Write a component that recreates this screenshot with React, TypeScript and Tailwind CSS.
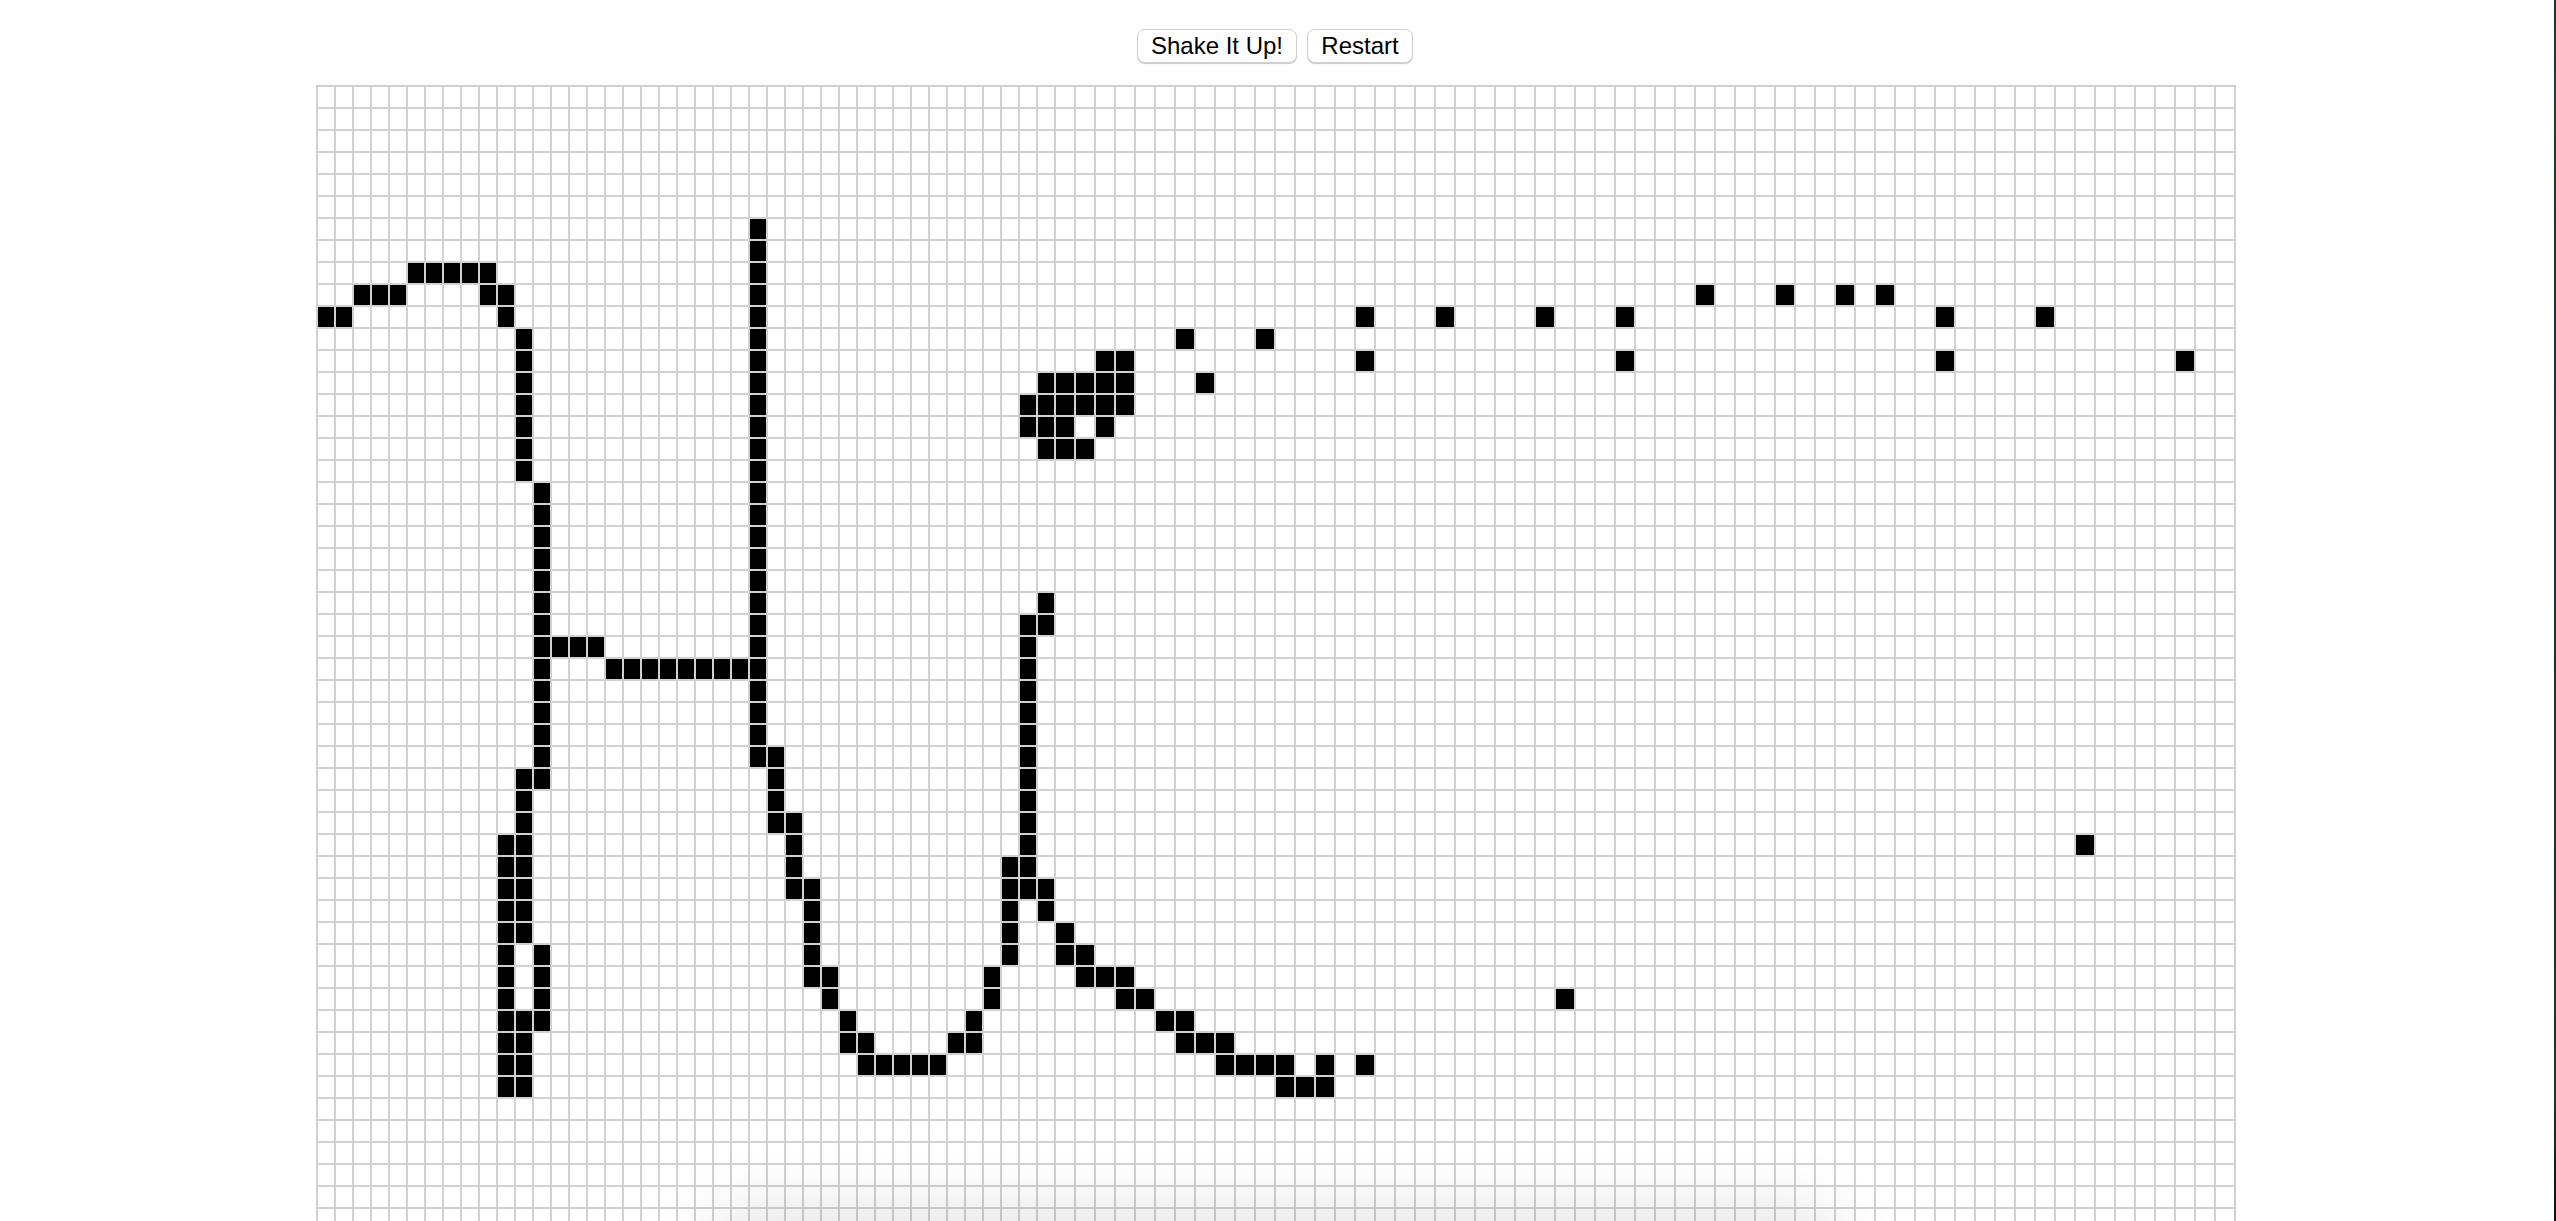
const BLACK_CELLS: Record<number, number[]> = {
  6: [24],
  7: [24],
  8: [5, 6, 7, 8, 9, 24],
  9: [2, 3, 4, 9, 10, 24, 73, 77, 80, 82],
  10: [0, 1, 10, 24, 56, 60, 65, 69, 85, 90],
  11: [11, 24, 47, 51],
  12: [11, 24, 43, 44, 56, 69, 85, 97],
  13: [11, 24, 40, 41, 42, 43, 44, 48],
  14: [11, 24, 39, 40, 41, 42, 43, 44],
  15: [11, 24, 39, 40, 41, 43],
  16: [11, 24, 40, 41, 42],
  17: [11, 24],
  18: [12, 24],
  19: [12, 24],
  20: [12, 24],
  21: [12, 24],
  22: [12, 24],
  23: [12, 24, 40],
  24: [12, 24, 39, 40],
  25: [12, 13, 14, 15, 24, 39],
  26: [12, 16, 17, 18, 19, 20, 21, 22, 23, 24, 39],
  27: [12, 24, 39],
  28: [12, 24, 39],
  29: [12, 24, 39],
  30: [12, 24, 25, 39],
  31: [11, 12, 25, 39],
  32: [11, 25, 39],
  33: [11, 25, 26, 39],
  34: [10, 11, 26, 39, 92],
  35: [10, 11, 26, 38, 39],
  36: [10, 11, 26, 27, 38, 39, 40],
  37: [10, 11, 27, 38, 40],
  38: [10, 11, 27, 38, 41],
  39: [10, 12, 27, 38, 41, 42],
  40: [10, 12, 27, 28, 37, 42, 43, 44],
  41: [10, 12, 28, 37, 44, 45, 66],
  42: [10, 11, 12, 29, 36, 46, 47],
  43: [10, 11, 29, 30, 35, 36, 47, 48, 49],
  44: [10, 11, 30, 31, 32, 33, 34, 49, 50, 51, 52, 54, 56],
  45: [10, 11, 52, 53, 54],
};

const ROWS = 52;
const COLS = 100;

function Button({ label, className }: { label: string; className: string }) {
  return (
    <button
      className={`${className} h-[34px] rounded-lg border border-[#d2d2d2] bg-white text-center text-2xl leading-none text-black shadow-[0_1px_1px_rgba(0,0,0,0.22)]`}
    >
      {label}
    </button>
  );
}

function Grid() {
  const cells = [];
  for (let r = 0; r < ROWS; r++) {
    const row = BLACK_CELLS[r] ?? [];
    for (let c = 0; c < COLS; c++) {
      cells.push(
        <div
          key={`${r}-${c}`}
          className={`h-[22px] border-t-2 border-l-2 border-[#d1d1d1] ${row.includes(c) ? "bg-black" : ""}`}
        />
      );
    }
  }
  return (
    <div className="mt-[22px] grid w-[1920px] shrink-0 grid-cols-[repeat(41,18px)_repeat(59,20px)] border-r-2 border-[#d1d1d1]">
      {cells}
    </div>
  );
}

export default function App() {
  return (
    <div className="relative flex h-[1221px] w-[2556px] overflow-hidden bg-white font-['Liberation_Sans',Arial,sans-serif]">
      <div className="flex w-[2552px] shrink-0 flex-col items-center pt-[29px]">
        <div className="mr-[2px] flex items-center gap-2.5">
          <Button label="Shake It Up!" className="w-[160px]" />
          <Button label="Restart" className="w-[106px]" />
        </div>
        <Grid />
      </div>
      <div className="ml-auto h-full w-[2px] bg-[linear-gradient(180deg,#0b3d1a_0%,#0d4a22_8%,#0a3a30_20%,#0d3a3a_35%,#12352e_60%,#0c3a2c_90%,#111111_100%)]" />
      {/* window shadow bleeding up from below the page */}
      <div className="pointer-events-none absolute top-[1240px] left-[750px] h-[40px] w-[1050px] shadow-[0_0_70px_30px_rgba(0,0,0,0.11)]" />
    </div>
  );
}
